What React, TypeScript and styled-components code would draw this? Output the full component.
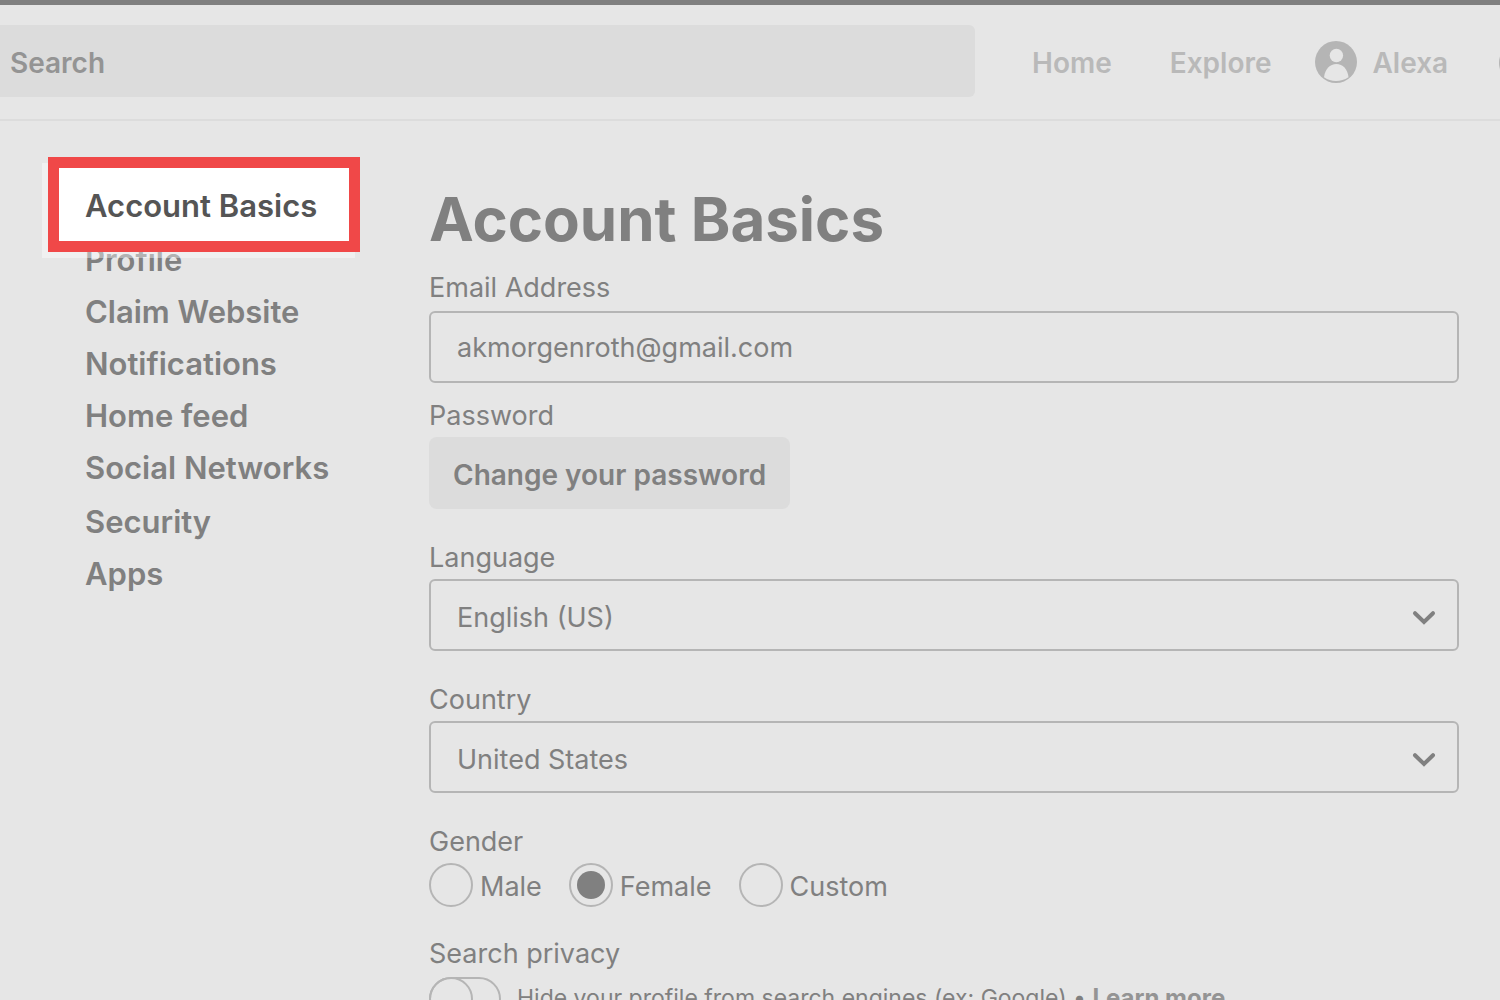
import React from "react";
import styled, { createGlobalStyle } from "styled-components";

const color = {
  page: "#e6e6e6",
  ink: "#808080",
  strong: "#555555",
  muted: "#949494",
  faint: "#b9b9b9",
  line: "#b5b5b5",
  fill: "#dcdcdc",
  accent: "#f04848",
};

const GlobalStyle = createGlobalStyle`
  *, *::before, *::after { box-sizing: border-box; }
  body {
    margin: 0;
    background: ${color.page};
    color: ${color.ink};
    font-family: Inter, "Liberation Sans", sans-serif;
    font-size: 27px;
    overflow-x: hidden;
  }
  input, select, button { font: inherit; color: inherit; }
`;

const Header = styled.header`
  display: grid;
  grid-template-columns: 65% 35%;
  align-items: center;
  padding: 20px 0 22px;
  border-top: 5px solid ${color.ink};
  border-bottom: 2px solid ${color.fill};
`;

const SearchBox = styled.input`
  width: 100%;
  height: 72px;
  padding: 4px 10px 0;
  border: 0;
  border-radius: 0 6px 6px 0;
  background: ${color.fill};
  font-size: 28px;
  font-weight: 600;
  &::placeholder {
    color: ${color.muted};
    opacity: 1;
  }
`;

const TopNav = styled.nav`
  display: flex;
  align-items: center;
  padding: 4px 0 0 57px;
  overflow: hidden;
`;

const TopLink = styled.a<{ $after: number }>`
  display: flex;
  flex-shrink: 0;
  align-items: flex-start;
  gap: 16px;
  margin-right: ${(p) => p.$after}px;
  color: ${color.faint};
  font-size: 28px;
  font-weight: 600;
  line-height: 44px;
  text-decoration: none;
`;

const RoundIcon = styled.svg`
  width: 42px;
  height: 42px;
  flex-shrink: 0;
`;

const Layout = styled.div`
  display: grid;
  grid-template-columns: 344px minmax(0, 1fr);
  padding: 50px 41px 0 85px;
`;

const SideNav = styled.nav`
  display: flex;
  flex-direction: column;
  gap: 2px;
  padding-top: 9px;
`;

const LinkGroup = styled.ul`
  margin: 0;
  padding: 0;
  list-style: none;
`;

const SideLink = styled.a`
  display: block;
  color: inherit;
  font-size: 31px;
  font-weight: 600;
  line-height: 52px;
  text-decoration: none;
  white-space: nowrap;
`;

const CurrentItem = styled.div`
  position: relative;
  color: ${color.strong};
`;

const CurrentText = styled.div`
  position: relative;
  z-index: 2;
`;

const Frame = styled.span`
  position: absolute;
  z-index: 1;
  top: -23px;
  left: -37px;
  width: 312px;
  height: 95px;
  border: 11px solid ${color.accent};
  background: #fff;
`;

const FrameShade = styled.span`
  position: absolute;
  z-index: 1;
  top: -17px;
  left: -43px;
  width: 313px;
  height: 95px;
  background: rgba(255, 255, 255, 0.4);
`;

const Title = styled.h1`
  margin: 0;
  font-size: 60px;
  font-weight: 700;
  line-height: 96px;
`;

const Form = styled.form`
  display: flex;
  flex-direction: column;
`;

const Field = styled.div<{ $gap?: number; $after?: number }>`
  display: flex;
  flex-direction: column;
  align-items: flex-start;
  gap: ${(p) => p.$gap ?? 0}px;
  margin-bottom: ${(p) => p.$after ?? 28}px;
`;

const FieldLabel = styled.label`
  line-height: 42px;
`;

const TextBox = styled.input`
  width: 100%;
  height: 72px;
  padding: 0 26px;
  border: 2px solid ${color.line};
  border-radius: 6px;
  background: transparent;
`;

const GreyButton = styled.button`
  height: 72px;
  padding: 4px 24px 0;
  border: 0;
  border-radius: 8px;
  background: ${color.fill};
  font-size: 28px;
  font-weight: 600;
`;

const SelectWrap = styled.div`
  position: relative;
  width: 100%;
`;

const SelectBox = styled.select`
  display: block;
  width: 100%;
  height: 72px;
  padding: 4px 60px 0 26px;
  border: 2px solid ${color.line};
  border-radius: 6px;
  background: transparent;
  appearance: none;
`;

const Chevron = styled.svg`
  position: absolute;
  top: 31px;
  right: 23px;
  width: 24px;
  height: 16px;
  pointer-events: none;
`;

const Choices = styled.div`
  display: flex;
  gap: 27px;
`;

const Choice = styled.label`
  display: flex;
  gap: 7px;
  line-height: 48px;
  height: 44px;
`;

const Radio = styled.input`
  display: grid;
  place-content: center;
  width: 44px;
  height: 44px;
  margin: 0;
  border: 2px solid ${color.line};
  border-radius: 50%;
  appearance: none;
  &:checked::before {
    content: "";
    width: 28px;
    height: 28px;
    border-radius: 50%;
    background: ${color.ink};
  }
`;

const PrivacyRow = styled.div`
  display: flex;
  align-items: flex-start;
  gap: 16px;
  font-size: 23px;
  line-height: 42px;
  white-space: nowrap;
`;

const Toggle = styled.input`
  width: 72px;
  height: 44px;
  margin: 0;
  border: 2px solid ${color.line};
  border-radius: 22px;
  appearance: none;
  &::before {
    content: "";
    display: block;
    width: 44px;
    height: 44px;
    margin: -2px;
    border: 2px solid ${color.line};
    border-radius: 50%;
  }
  &:checked::before {
    margin-left: 26px;
  }
`;

const MoreLink = styled.a`
  color: ${color.muted};
  font-size: 24px;
  font-weight: 700;
  text-decoration: none;
`;

const groups = [
  ["Profile", "Claim Website", "Notifications", "Home feed", "Social Networks"],
  ["Security", "Apps"],
];

function SelectField({ id, label, options }: { id: string; label: string; options: string[] }) {
  return (
    <Field>
      <FieldLabel htmlFor={id}>{label}</FieldLabel>
      <SelectWrap>
        <SelectBox id={id}>
          {options.map((o) => (
            <option key={o}>{o}</option>
          ))}
        </SelectBox>
        <Chevron viewBox="0 0 24 16" aria-hidden="true">
          <path d="M3 3.2 12 12 21 3.2" fill="none" stroke={color.ink} strokeWidth="4" strokeLinecap="round" />
        </Chevron>
      </SelectWrap>
    </Field>
  );
}

export default function App() {
  return (
    <>
      <GlobalStyle />
      <Header>
        <SearchBox type="search" placeholder="Search" aria-label="Search" />
        <TopNav>
          <TopLink href="#home" $after={58}>Home</TopLink>
          <TopLink href="#explore" $after={43}>Explore</TopLink>
          <TopLink href="#alexa" $after={51}>
            <RoundIcon viewBox="0 0 42 42" aria-hidden="true">
              <circle cx="21" cy="21" r="21" fill={color.line} />
              <circle cx="21.4" cy="14.5" r="6.7" fill={color.page} />
              <path d="M9 36.3C10 28 15 23 21.4 23S32.6 28 33.5 36.3C29.5 38.9 25.5 40 21 40S12.8 38.9 9 36.3Z" fill={color.page} />
            </RoundIcon>
            Alexa
          </TopLink>
          <TopLink href="#messages" $after={0} aria-label="Messages">
            <RoundIcon viewBox="0 0 42 42" aria-hidden="true">
              <circle cx="21" cy="21" r="21" fill={color.line} />
            </RoundIcon>
          </TopLink>
        </TopNav>
      </Header>
      <Layout>
        <SideNav>
          <CurrentItem>
            <FrameShade />
            <Frame />
            <CurrentText>
              <SideLink href="#basics" aria-current="page">Account Basics</SideLink>
            </CurrentText>
          </CurrentItem>
          {groups.map((names) => (
            <LinkGroup key={names[0]}>
              {names.map((name) => (
                <li key={name}>
                  <SideLink href="#settings">{name}</SideLink>
                </li>
              ))}
            </LinkGroup>
          ))}
        </SideNav>
        <main>
          <Title>Account Basics</Title>
          <Form>
            <Field $gap={2} $after={12}>
              <FieldLabel htmlFor="email">Email Address</FieldLabel>
              <TextBox id="email" type="email" defaultValue="akmorgenroth@gmail.com" />
            </Field>
            <Field>
              <FieldLabel htmlFor="password">Password</FieldLabel>
              <GreyButton id="password" type="button">Change your password</GreyButton>
            </Field>
            <SelectField id="language" label="Language" options={["English (US)"]} />
            <SelectField id="country" label="Country" options={["United States"]} />
            <Field role="radiogroup" aria-labelledby="gender" $after={26}>
              <FieldLabel as="span" id="gender">Gender</FieldLabel>
              <Choices>
                {["Male", "Female", "Custom"].map((name) => (
                  <Choice key={name}>
                    <Radio type="radio" name="gender" value={name} defaultChecked={name === "Female"} />
                    {name}
                  </Choice>
                ))}
              </Choices>
            </Field>
            <Field $gap={2} $after={0}>
              <FieldLabel htmlFor="privacy">Search privacy</FieldLabel>
              <PrivacyRow>
                <Toggle id="privacy" type="checkbox" />
                <span>
                  Hide your profile from search engines (ex: Google) • <MoreLink href="#more">Learn more</MoreLink>
                </span>
              </PrivacyRow>
            </Field>
          </Form>
        </main>
      </Layout>
    </>
  );
}
